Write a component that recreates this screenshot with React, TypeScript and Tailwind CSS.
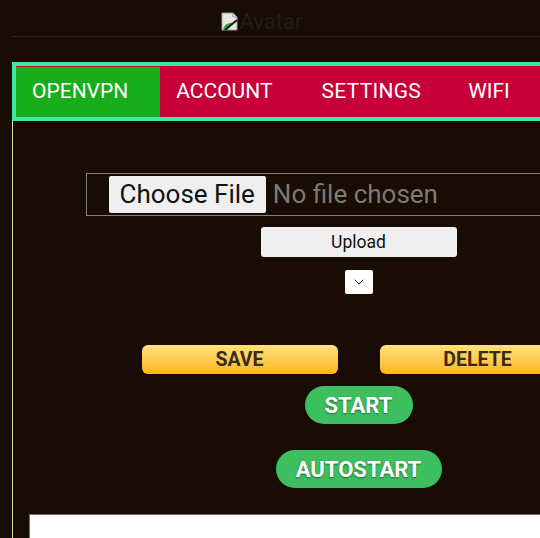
import { ChevronDown } from 'lucide-react'

function BrokenImage() {
  return (
    <svg width="20" height="20" viewBox="0 0 20 20" className="shrink-0">
      <path d="M2 1h11l4 4v13H2z" fill="#e8e8e8" stroke="#9a9a9a" strokeWidth="1" />
      <path d="M13 1v4h4" fill="#cfcfcf" stroke="#9a9a9a" strokeWidth="1" />
      <path d="M3 17c2-5 6-7 10-6l-6 7z" fill="#3aa64a" />
      <path d="M5 18 17 8" stroke="#1a1a1a" strokeWidth="2" />
    </svg>
  )
}

export default function App() {
  return (
    <div
      className="relative h-[538px] w-[540px] overflow-hidden bg-[#190c04]"
      style={{ fontFamily: 'Roboto, "Liberation Sans", sans-serif' }}
    >
      <div className="w-[720px]">
        <header className="flex h-[36px] items-start justify-center pt-[11px]">
          <div className="mr-[198px] flex items-center text-[22px] leading-[22px] text-[#231c17]">
            <BrokenImage />
            <span>Avatar</span>
          </div>
        </header>

        <div className="ml-[12px] border-t border-[#2e241c] pt-[25px]">
          <nav className="flex h-[59px] border-4 border-[#3de8a0] bg-[#c8003a] pt-px text-[21px] text-white">
            <div className="flex items-center bg-[#17ad1b] pr-[32px] pl-[16px]">OPENVPN</div>
            <div className="flex items-center pr-[24px] pl-[16px]">ACCOUNT</div>
            <div className="flex items-center pr-[23px] pl-[25px] tracking-[0.3px]">SETTINGS</div>
            <div className="flex items-center px-[24px]">WIFI</div>
          </nav>

          <div className="flex h-[420px] w-[692px] flex-col items-center border-l border-[#d6e28c] pt-[52px]">
            <div className="flex h-[43px] w-[546px] shrink-0 items-center border border-[#8a8070] pl-[22px]">
              <div className="flex h-[37px] items-center rounded-[2px] bg-[#efefef] px-[11px] text-[26px] text-[#111]">
                Choose File
              </div>
              <span className="ml-[7px] text-[26px] text-[#7d7a72]">No file chosen</span>
            </div>

            <button className="mt-[11px] h-[30px] w-[196px] shrink-0 rounded-[3px] bg-[#efefef] text-[17.5px] text-[#111]">
              Upload
            </button>

            <div className="mt-[13px] flex h-[24px] w-[28px] shrink-0 items-center justify-center rounded-[2px] bg-white">
              <ChevronDown size={16} color="#222" strokeWidth={1.5} />
            </div>

            <div className="mt-[51px] flex shrink-0 gap-[42px]">
              <button className="h-[29px] w-[196px] rounded-[6px] bg-gradient-to-b from-[#ffe27a] to-[#ffb410] text-[19.5px] font-bold text-[#3a2c14]">
                SAVE
              </button>
              <button className="h-[29px] w-[196px] rounded-[6px] bg-gradient-to-b from-[#ffe27a] to-[#ffb410] text-[19.5px] font-bold text-[#3a2c14]">
                DELETE
              </button>
            </div>

            <button className="mt-[12px] h-[38px] w-[108px] shrink-0 rounded-full bg-[#3dbf60] text-[22px] font-bold text-white [text-shadow:0_1px_2px_rgba(0,0,0,0.45)]">
              START
            </button>

            <button className="mt-[26px] h-[38px] w-[166px] shrink-0 rounded-full bg-[#3dbf60] text-[22px] font-bold text-white [text-shadow:0_1px_2px_rgba(0,0,0,0.45)]">
              AUTOSTART
            </button>

            <div className="mt-[26px] h-[40px] w-[675px] shrink-0 self-end border-t border-l border-[#6e6a66] bg-white" />
          </div>
        </div>
      </div>
    </div>
  )
}
